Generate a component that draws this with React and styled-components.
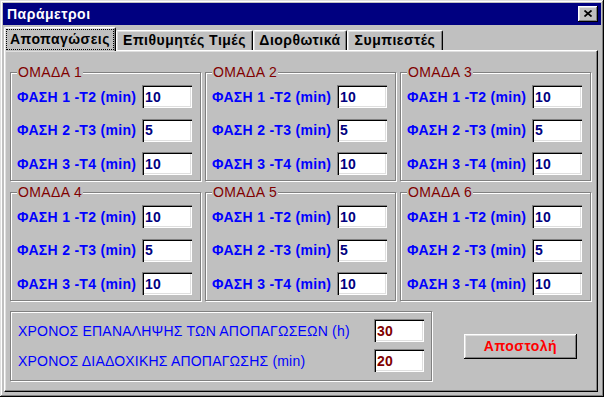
import React from 'react'
import styled, { createGlobalStyle } from 'styled-components'

const GlobalStyle = createGlobalStyle`
  html, body {
    margin: 0;
    padding: 0;
    background: #c0c0c0;
  }
  body {
    font-family: "Liberation Sans", Arial, sans-serif;
  }
`

const tabs = [
  { label: 'Αποπαγώσεις', width: 112, active: true },
  { label: 'Επιθυμητές Τιμές', width: 137 },
  { label: 'Διορθωτικά', width: 94 },
  { label: 'Συμπιεστές', width: 96 },
]

const phases = ['ΦΑΣΗ 1 -Τ2 (min)', 'ΦΑΣΗ 2 -Τ3 (min)', 'ΦΑΣΗ 3 -Τ4 (min)']
const groups = [1, 2, 3, 4, 5, 6].map((n) => ({ name: `ΟΜΑΔΑ ${n}`, values: ['10', '5', '10'] }))

const CloseIcon = () => (
  <svg width="8" height="7" viewBox="0 0 8 7">
    <path d="M0.5 0.5 L7.5 6.5 M7.5 0.5 L0.5 6.5" stroke="#000" strokeWidth="1.7" fill="none" />
  </svg>
)

const App = () => {
  return (
    <Window>
      <GlobalStyle />
      <TitleBar>
        <Title>Παράμετροι</Title>
        <CloseButton aria-label="close">
          <CloseIcon />
        </CloseButton>
      </TitleBar>
      <TabStrip>
        {tabs.map((t) => (
          <Tab key={t.label} $w={t.width} $active={t.active}>
            {t.active ? <Focus>{t.label}</Focus> : t.label}
          </Tab>
        ))}
      </TabStrip>
      <Panel>
        <Groups>
          {groups.map((g) => (
            <Group key={g.name}>
              <Legend>{g.name}</Legend>
              <Rows>
                {phases.map((p, i) => (
                  <React.Fragment key={p}>
                    <PhaseLabel>{p}</PhaseLabel>
                    <Field readOnly defaultValue={g.values[i]} $color="#000080" />
                  </React.Fragment>
                ))}
              </Rows>
            </Group>
          ))}
        </Groups>
        <Footer>
          <TimeBox>
            <TimeLabel>ΧΡΟΝΟΣ ΕΠΑΝΑΛΗΨΗΣ ΤΩΝ ΑΠΟΠΑΓΩΣΕΩΝ (h)</TimeLabel>
            <Field readOnly defaultValue="30" $color="#800000" />
            <TimeLabel>ΧΡΟΝΟΣ ΔΙΑΔΟΧΙΚΗΣ ΑΠΟΠΑΓΩΣΗΣ (min)</TimeLabel>
            <Field readOnly defaultValue="20" $color="#800000" />
          </TimeBox>
          <SendButton>Αποστολή</SendButton>
        </Footer>
      </Panel>
    </Window>
  )
}

export default App

const raised = `
  box-shadow: inset -1px -1px #000, inset 1px 1px #fff, inset -2px -2px #808080, inset 2px 2px #dfdfdf;
`

const Window = styled.div`
  box-sizing: border-box;
  width: 604px;
  height: 397px;
  padding: 3px;
  background: #c0c0c0;
  display: flex;
  flex-direction: column;
  box-shadow: inset -1px -1px #000, inset 1px 1px #dfdfdf, inset -2px -2px #808080, inset 2px 2px #fff;
`

const TitleBar = styled.div`
  flex-shrink: 0;
  height: 22px;
  background: #000080;
  display: flex;
  align-items: center;
  justify-content: space-between;
  padding: 0 3px 0 4px;
`

const Title = styled.span`
  color: #fff;
  font-size: 14px;
  font-weight: bold;
  letter-spacing: 0.5px;
`

const CloseButton = styled.button`
  width: 20px;
  height: 16px;
  padding: 0 0 1px;
  border: none;
  background: #c0c0c0;
  display: flex;
  align-items: center;
  justify-content: center;
  ${raised}
`

const TabStrip = styled.div`
  flex-shrink: 0;
  display: flex;
  align-items: flex-end;
  height: 23px;
  margin: 2px 0 0 1px;
  position: relative;
  z-index: 1;
`

const Tab = styled.div`
  box-sizing: border-box;
  width: ${({ $w }) => $w}px;
  height: ${({ $active }) => ($active ? 24 : 20)}px;
  margin-bottom: ${({ $active }) => ($active ? -1 : 0)}px;
  padding: ${({ $active }) => ($active ? '1px' : '0 0 1px')};
  background: #c0c0c0;
  border-top: 1px solid #fff;
  border-left: 1px solid #fff;
  border-right: 1px solid #000;
  border-radius: 2px 2px 0 0;
  box-shadow: inset -1px 0 #808080, inset 1px 1px #dfdfdf;
  display: flex;
  align-items: stretch;
  justify-content: center;
  line-height: 18px;
  font-size: 14px;
  font-weight: bold;
  letter-spacing: 0.5px;
  color: #000;
  white-space: nowrap;
`

const Focus = styled.span`
  flex: 1;
  display: flex;
  align-items: center;
  justify-content: center;
  border: 1px dotted #000;
  padding-bottom: 1px;
`

const Panel = styled.div`
  flex: 1;
  box-sizing: border-box;
  margin: 0 3px 2px 1px;
  padding: 13px 0 0 5px;
  border-top: 1px solid #fff;
  border-left: 1px solid #fff;
  border-right: 1px solid #000;
  border-bottom: 1px solid #000;
  box-shadow: inset -1px -1px #808080, inset 1px 1px #dfdfdf;
`

const Groups = styled.div`
  display: grid;
  grid-template-columns: repeat(3, 191px);
  column-gap: 4px;
  row-gap: 3px;
`

const Group = styled.fieldset`
  box-sizing: border-box;
  margin: 0;
  min-width: 0;
  padding: 5px 8px 5px 6px;
  border: 1px solid #808080;
  box-shadow: 1px 1px 0 #fff, inset 1px 1px 0 #fff;
`

const Legend = styled.legend`
  padding: 0 1px;
  background: #c0c0c0;
  color: #800000;
  font-size: 14px;
  line-height: 16px;
  letter-spacing: 0.4px;
`

const Rows = styled.div`
  display: grid;
  grid-template-columns: 1fr 50px;
  grid-auto-rows: 23px;
  row-gap: 10.5px;
  align-items: center;
`

const PhaseLabel = styled.span`
  color: #0000ff;
  font-size: 14px;
  font-weight: bold;
  letter-spacing: 0.3px;
  white-space: nowrap;
`

const Field = styled.input`
  box-sizing: border-box;
  width: 50px;
  height: 23px;
  margin: 0;
  padding: 0 0 0 3px;
  border: none;
  outline: none;
  background: #fff;
  box-shadow: inset 1px 1px #808080, inset 2px 2px #000, inset -1px -1px #fff, inset -2px -2px #dfdfdf;
  font: bold 14px "Liberation Sans", Arial, sans-serif;
  letter-spacing: 0.3px;
  color: ${({ $color }) => $color};
`

const Footer = styled.div`
  display: flex;
  align-items: center;
  margin-top: 10px;
`

const TimeBox = styled.div`
  box-sizing: border-box;
  width: 422px;
  padding: 7px 7px 8px 7px;
  border: 1px solid #808080;
  box-shadow: 1px 1px 0 #fff, inset 1px 1px 0 #fff;
  display: grid;
  grid-template-columns: 1fr 50px;
  grid-auto-rows: 23px;
  row-gap: 7px;
  align-items: center;
`

const TimeLabel = styled.span`
  color: #0000ff;
  font-size: 14px;
  letter-spacing: 0.2px;
  white-space: nowrap;
`

const SendButton = styled.button`
  margin-left: 32px;
  width: 113px;
  height: 25px;
  padding: 0 0 1px;
  border: none;
  background: #c0c0c0;
  color: #ff0000;
  font: bold 14px "Liberation Sans", Arial, sans-serif;
  letter-spacing: 0.5px;
  ${raised}
`
